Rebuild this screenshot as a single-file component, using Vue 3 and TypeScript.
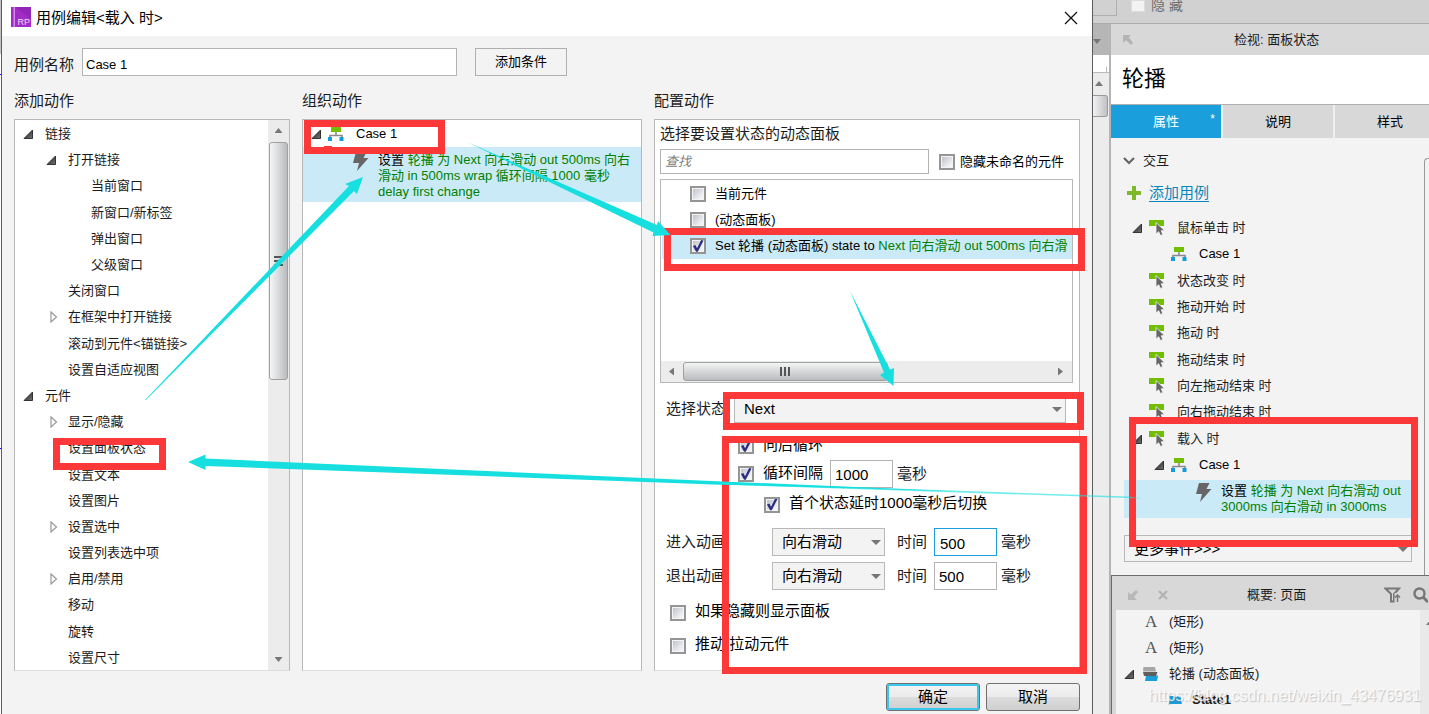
<script setup lang="ts">
import { ref } from 'vue'

interface TreeNode {
  label: string
  level: 1 | 2 | 3
  state?: 'open' | 'closed'
}

interface EventNode {
  label: string
  kind: 'event' | 'case'
  open?: boolean
}

const caseName = ref('Case 1')
const search = ref('')
const hideUnnamed = ref(false)
const stateName = ref('Next')
const wrap = ref(true)
const loop = ref(true)
const loopDelay = ref('1000')
const delayFirst = ref(true)
const showIfHidden = ref(false)
const pushPull = ref(false)
const moreEvents = ref('更多事件>>>')
const hideAll = ref(false)

const actions: TreeNode[] = [
  { label: '链接', level: 1, state: 'open' },
  { label: '打开链接', level: 2, state: 'open' },
  { label: '当前窗口', level: 3 },
  { label: '新窗口/新标签', level: 3 },
  { label: '弹出窗口', level: 3 },
  { label: '父级窗口', level: 3 },
  { label: '关闭窗口', level: 2 },
  { label: '在框架中打开链接', level: 2, state: 'closed' },
  { label: '滚动到元件<锚链接>', level: 2 },
  { label: '设置自适应视图', level: 2 },
  { label: '元件', level: 1, state: 'open' },
  { label: '显示/隐藏', level: 2, state: 'closed' },
  { label: '设置面板状态', level: 2 },
  { label: '设置文本', level: 2 },
  { label: '设置图片', level: 2 },
  { label: '设置选中', level: 2, state: 'closed' },
  { label: '设置列表选中项', level: 2 },
  { label: '启用/禁用', level: 2, state: 'closed' },
  { label: '移动', level: 2 },
  { label: '旋转', level: 2 },
  { label: '设置尺寸', level: 2 },
]

const targets = ref([
  { id: 't1', label: '当前元件', detail: '', checked: false },
  { id: 't2', label: '(动态面板)', detail: '', checked: false },
  { id: 't3', label: 'Set 轮播 (动态面板) state to ', detail: 'Next 向右滑动 out 500ms 向右滑', checked: true },
])

const animations = ref([
  { id: 'in', label: '进入动画', effect: '向右滑动', time: '500', active: true },
  { id: 'out', label: '退出动画', effect: '向右滑动', time: '500', active: false },
])

const events: EventNode[] = [
  { label: '鼠标单击 时', kind: 'event', open: true },
  { label: 'Case 1', kind: 'case' },
  { label: '状态改变 时', kind: 'event' },
  { label: '拖动开始 时', kind: 'event' },
  { label: '拖动 时', kind: 'event' },
  { label: '拖动结束 时', kind: 'event' },
  { label: '向左拖动结束 时', kind: 'event' },
  { label: '向右拖动结束 时', kind: 'event' },
  { label: '载入 时', kind: 'event', open: true },
  { label: 'Case 1', kind: 'case', open: true },
]
</script>

<template>
  <div class="screen">
    <svg class="defs" width="0" height="0" aria-hidden="true">
      <defs>
        <linearGradient id="toggleFill" x1="0" y1="0" x2="1" y2="1">
          <stop offset="0.3" stop-color="#333" />
          <stop offset="1" stop-color="#777" />
        </linearGradient>
      </defs>
      <symbol id="i-open" viewBox="0 0 10 10">
        <path d="M9.5 1V9.5H1Z" fill="url(#toggleFill)" stroke="#333" stroke-width="1" />
      </symbol>
      <symbol id="i-closed" viewBox="0 0 8 12">
        <path d="M1 1L6.5 6L1 11Z" fill="#fff" stroke="#999" stroke-width="1.2" />
      </symbol>
      <symbol id="i-case" viewBox="0 0 16 14">
        <path d="M8 5V9M2 11V8.5H14V11" fill="none" stroke="#8a8a8a" stroke-width="1.6" />
        <path d="M3 0H13V5H3Z" fill="#72bf00" />
        <path d="M0 10H4V14H0ZM11.5 10H15.5V14H11.5Z" fill="#109bdc" />
      </symbol>
      <symbol id="i-event" viewBox="0 0 16 16">
        <path d="M0 0H15V6H0Z" fill="#72bf00" />
        <path d="M7 2.5V14L9.7 11.7L11.5 15.5L13.8 14.4L12.2 10.8L15.5 10.5Z" fill="#666" stroke="#f3f3f3" stroke-width="0.8" />
      </symbol>
      <symbol id="i-bolt" viewBox="0 0 16 20">
        <path d="M3 0H13.5L10.5 6H15.5L4 19L6 11H0Z" fill="#666" />
      </symbol>
      <symbol id="i-stack" viewBox="0 0 16 14">
        <path d="M4 8.5H16L15 14H3Z" fill="#1b9dd9" />
        <path d="M1 5H15.500L14 9H2Z" fill="#5e5e5e" />
        <path d="M1.500 0H13L14 4.500H1Z" fill="#a6a6a6" />
      </symbol>
      <symbol id="i-state" viewBox="0 0 14 8">
        <path d="M1.5 0H6.500L8 1.500L9.500 0H13V5L14 8H0L1 5Z" fill="#1b9dd9" />
      </symbol>
    </svg>

    <div class="edge" aria-hidden="true"></div>

    <main class="dialog">
      <header class="titlebar">
        <svg class="logo" viewBox="0 0 20 20" aria-hidden="true">
          <path d="M0 0H20V20H0Z" fill="#a32bc8" />
          <path d="M2.5 0H4V20H2.5Z" fill="#d08be6" />
          <path d="M4 0H20V12Z" fill="#9226b8" />
          <text x="6.5" y="17.5" class="logo-text">RP</text>
        </svg>
        <h1>用例编辑&lt;载入 时&gt;</h1>
        <button class="close" type="button" aria-label="关闭">
          <svg viewBox="0 0 14 14"><path d="M1 1L13 13M13 1L1 13" stroke="#111" stroke-width="1.3" /></svg>
        </button>
      </header>

      <div class="name-row">
        <label for="case-name">用例名称</label>
        <input id="case-name" v-model="caseName" class="text name-input" type="text" />
        <button class="flat" type="button">添加条件</button>
      </div>

      <div class="columns">
        <section class="col">
          <h2>添加动作</h2>
          <div class="panel with-scroll">
            <ul class="action-tree">
              <li v-for="node in actions" :key="node.label" :class="'lv' + node.level">
                <span class="toggle">
                  <svg v-if="node.state === 'open'" class="ic-open"><use href="#i-open" /></svg>
                  <svg v-if="node.state === 'closed'" class="ic-closed"><use href="#i-closed" /></svg>
                </span>
                <span>{{ node.label }}</span>
              </li>
            </ul>
            <div class="vscroll" aria-hidden="true">
              <i class="tri up"></i>
              <div class="vthumb"><b></b><b></b><b></b></div>
              <i class="tri down"></i>
            </div>
          </div>
        </section>

        <section class="col">
          <h2>组织动作</h2>
          <div class="panel organize">
            <div class="case-row">
              <span class="toggle"><svg class="ic-open"><use href="#i-open" /></svg></span>
              <svg class="ic-case"><use href="#i-case" /></svg>
              <span>Case 1</span>
            </div>
            <div class="action-row">
              <svg class="ic-bolt"><use href="#i-bolt" /></svg>
              <p>设置 <em>轮播 为 Next 向右滑动 out 500ms 向右滑动 in 500ms wrap 循环间隔 1000 毫秒 delay first change</em></p>
            </div>
          </div>
        </section>

        <section class="col">
          <h2>配置动作</h2>
          <div class="panel config">
            <h3>选择要设置状态的动态面板</h3>
            <div class="search-row">
              <input v-model="search" class="text search" type="text" placeholder="查找" aria-label="查找" />
              <input id="hide-unnamed" v-model="hideUnnamed" type="checkbox" />
              <label for="hide-unnamed">隐藏未命名的元件</label>
            </div>
            <div class="target-box">
              <ul>
                <li v-for="t in targets" :key="t.id" :class="{ picked: t.checked }">
                  <input :id="t.id" v-model="t.checked" type="checkbox" />
                  <label :for="t.id">{{ t.label }}<em>{{ t.detail }}</em></label>
                </li>
              </ul>
              <div class="hscroll" aria-hidden="true">
                <i class="tri left"></i>
                <div class="htrack"><div class="hthumb"><b></b><b></b><b></b></div></div>
                <i class="tri right"></i>
              </div>
            </div>

            <div class="state-row">
              <label for="state">选择状态</label>
              <span class="select">
                <select id="state" v-model="stateName"><option>Next</option></select>
              </span>
            </div>
            <div class="opt inset">
              <input id="wrap" v-model="wrap" type="checkbox" />
              <label for="wrap">向后循环</label>
            </div>
            <div class="opt inset">
              <input id="loop" v-model="loop" type="checkbox" />
              <label for="loop">循环间隔</label>
              <input v-model="loopDelay" class="text ms" type="text" aria-label="循环间隔毫秒" />
              <span class="unit">毫秒</span>
            </div>
            <div class="opt inset-more">
              <input id="delay" v-model="delayFirst" type="checkbox" />
              <label for="delay">首个状态延时1000毫秒后切换</label>
            </div>
            <div v-for="a in animations" :key="a.id" class="anim">
              <label :for="'fx-' + a.id">{{ a.label }}</label>
              <span class="select">
                <select :id="'fx-' + a.id" v-model="a.effect"><option>向右滑动</option></select>
              </span>
              <label :for="'time-' + a.id">时间</label>
              <input :id="'time-' + a.id" v-model="a.time" class="text ms" :class="{ active: a.active }" type="text" />
              <span class="unit">毫秒</span>
            </div>
            <div class="opt last">
              <input id="show-hidden" v-model="showIfHidden" type="checkbox" />
              <label for="show-hidden">如果隐藏则显示面板</label>
            </div>
            <div class="opt last">
              <input id="push" v-model="pushPull" type="checkbox" />
              <label for="push">推动/拉动元件</label>
            </div>
          </div>
        </section>
      </div>

      <footer class="buttons">
        <button class="push primary" type="button">确定</button>
        <button class="push" type="button">取消</button>
      </footer>
    </main>

    <aside class="app">
      <div class="toolbar">
        <span class="tool-box"></span>
        <input id="hide-all" v-model="hideAll" class="plain" type="checkbox" />
        <label for="hide-all">隐 藏</label>
      </div>
      <div class="app-body">
        <div class="gutter" aria-hidden="true">
          <div class="gutter-head"><i class="tri down"></i></div>
          <div class="ruler"></div>
          <div class="gutter-scroll"><i class="tri up"></i><div class="gutter-thumb"></div></div>
        </div>
        <div class="inspector">
          <header class="bar inspect-bar">
            <svg class="bar-arrow" viewBox="0 0 10 10"><path d="M0 0H8L5.800 2.200L10 8L8 10L3 5L0 8Z" fill="#b4b4b4" /></svg>
            <span>检视: 面板状态</span>
          </header>
          <div class="widget-name">轮播</div>
          <nav class="tabs">
            <button class="on" type="button">属性<sup>*</sup></button>
            <button type="button">说明</button>
            <button type="button">样式</button>
          </nav>
          <div class="props">
            <div class="props-main">
              <div class="group">
                <svg viewBox="0 0 12 8"><path d="M1 1L6 6L11 1" fill="none" stroke="#666" stroke-width="2.2" /></svg>
                <span>交互</span>
              </div>
              <div class="add-case">
                <svg viewBox="0 0 14 14"><path d="M5 0H9V5H14V9H9V14H5V9H0V5H5Z" fill="#7db928" /></svg>
                <a href="#add-case">添加用例</a>
              </div>
              <ul class="events">
                <li v-for="(e, i) in events" :key="i" :class="e.kind">
                  <span class="toggle"><svg v-if="e.open" class="ic-open"><use href="#i-open" /></svg></span>
                  <svg v-if="e.kind === 'event'" class="ic-event"><use href="#i-event" /></svg>
                  <svg v-else class="ic-case"><use href="#i-case" /></svg>
                  <span>{{ e.label }}</span>
                </li>
              </ul>
              <div class="action-row loaded">
                <svg class="ic-bolt"><use href="#i-bolt" /></svg>
                <p>设置 <em>轮播 为 Next 向右滑动 out 3000ms 向右滑动 in 3000ms</em></p>
              </div>
              <span class="select more">
                <select v-model="moreEvents" aria-label="更多事件"><option>更多事件&gt;&gt;&gt;</option></select>
              </span>
            </div>
            <div class="props-scroll" aria-hidden="true"></div>
          </div>
          <section class="outline">
            <header class="bar outline-bar">
              <svg class="bar-arrow" viewBox="0 0 10 10"><path d="M0 10H9L6 7L10 2L8 0L3 4.500L0 2Z" fill="#b8b8b8" /></svg>
              <svg class="bar-x" viewBox="0 0 10 10"><path d="M1 1L9 9M9 1L1 9" stroke="#b4b4b4" stroke-width="2.4" /></svg>
              <span>概要: 页面</span>
              <svg class="bar-filter" viewBox="0 0 17 16"><path d="M1.500 1.500H15L10 7V14.500H7V7Z" fill="none" stroke="#777" stroke-width="2" /><path d="M10.500 6H17V16H10.500Z" fill="#d8d8d8" /><path d="M13.500 15V8M11 10.500L13.500 8L16 10.500" fill="none" stroke="#777" stroke-width="1.5" /></svg>
              <svg class="bar-search" viewBox="0 0 15 16"><circle cx="6.5" cy="6.5" r="5" fill="none" stroke="#777" stroke-width="2.4" /><path d="M10 10L15 15" stroke="#777" stroke-width="3" /></svg>
            </header>
            <div class="outline-body">
              <ul class="outline-list">
                <li><span class="toggle"></span><span class="glyph">A</span><span>(矩形)</span></li>
                <li><span class="toggle"></span><span class="glyph">A</span><span>(矩形)</span></li>
                <li><span class="toggle"><svg class="ic-open"><use href="#i-open" /></svg></span><svg class="ic-stack"><use href="#i-stack" /></svg><span>轮播 (动态面板)</span></li>
                <li class="child"><svg class="ic-state"><use href="#i-state" /></svg><strong>State1</strong></li>
              </ul>
              <div class="outline-scroll" aria-hidden="true"><i class="tri up"></i></div>
            </div>
          </section>
        </div>
      </div>
    </aside>

    <div class="watermark">https://blog.csdn.net/weixin_43476931</div>

    <svg class="marks" width="1429" height="714" viewBox="0 0 1429 714" aria-hidden="true">
      <g fill="none" stroke="#fc3838" stroke-width="7">
        <rect x="56.5" y="441.5" width="106" height="25" />
        <rect x="307.5" y="123.5" width="134" height="27" />
        <rect x="667.5" y="231.5" width="414" height="36" />
        <rect x="726.5" y="395.5" width="354" height="31" />
        <rect x="725.5" y="439.5" width="358" height="231" />
        <rect x="1132.5" y="420.5" width="282" height="123" />
      </g>
      <rect x="324" y="146" width="8" height="2" fill="#fc3838" />
      <g fill="#18dfdf">
        <path d="M145 400L349 186L345 184L363 177L357 194L354 191L146 400Z" />
        <path d="M467 142L657 225L658 221L670.5 235L652.5 236L653.5 232.5Z" />
        <path d="M850 291L890 369.5L894 368L893.5 386L880 375L884 372.5Z" />
        <path d="M188 462L205.5 454.5V458.5L700 480.5L960 491.5L700 484L205.5 466V470Z" />
      </g>
      <path d="M700 482L1128 496.5L1142 498.5L1128 498L700 484Z" fill="#18dfdf" fill-opacity="0.6" />
    </svg>
  </div>
</template>

<style>
html,
body {
  margin: 0;
  overflow: hidden;
}
</style>

<style scoped>
.screen {
  position: relative;
  display: flex;
  height: 100vh;
  overflow: hidden;
  background: #f3f3f3;
  color: #1c1c1c;
  font-family: "Liberation Sans", "Noto Sans CJK SC", sans-serif;
  font-size: 13px;
  line-height: 16px;
}
.screen * {
  box-sizing: border-box;
}
.defs {
  position: absolute;
}
ul {
  margin: 0;
  padding: 0;
  list-style: none;
}
h1,
h2,
h3,
p {
  margin: 0;
  font-weight: normal;
}
button,
input,
select {
  margin: 0;
  padding: 0;
  color: #000;
  font: inherit;
}
em {
  color: #008000;
  font-style: normal;
}
svg {
  flex: none;
}
.edge {
  flex: 0 0 1px;
  background: linear-gradient(#c4c4c4 54px, #fff 54px, #fff 74px, #00f 74px, #00f 75px, #fff 75px, #fff 448px, #00f 448px, #00f 449px, #fff 449px);
}

/* dialog */
.dialog {
  display: flex;
  flex: 1;
  flex-direction: column;
  min-width: 0;
  border-right: 1px solid #5c5c5c;
  border-left: 1px solid #5c5c5c;
}
.titlebar {
  display: flex;
  align-items: center;
  height: 36px;
  padding: 0 14px 0 9px;
  background: #fff;
}
.logo {
  width: 20px;
  height: 20px;
  margin: 0 5px 3px 0;
}
.logo-text {
  fill: #f0d8f8;
  font-size: 9px;
}
h1 {
  flex: 1;
  color: #000;
  font-size: 15px;
}
.close {
  width: 14px;
  height: 14px;
  border: 0;
  background: none;
}
.close svg {
  display: block;
  width: 14px;
  height: 14px;
}
.name-row {
  display: flex;
  align-items: center;
  height: 28px;
  margin: 12px 12px 0;
  font-size: 15px;
}
.name-row label {
  width: 68px;
  padding-top: 5px;
}
.text {
  height: 28px;
  border: 1px solid #b4b4b4;
  background: #fff;
  outline: 0;
}
.name-input {
  width: 375px;
  padding: 4px 3px 0;
  font-size: 13px;
}
.flat {
  width: 92px;
  height: 28px;
  margin-left: 18px;
  border: 1px solid #b0b0b0;
  background: #f3f3f3;
  font-size: 13px;
}
.columns {
  display: grid;
  flex: 1;
  grid-template-columns: 276fr 340fr 426fr;
  gap: 12px;
  min-height: 0;
  padding: 14px 12px 0;
}
.col {
  display: flex;
  flex-direction: column;
  min-width: 0;
  min-height: 0;
}
h2 {
  height: 29px;
  padding-top: 1px;
  font-size: 15px;
  line-height: 20px;
}
.panel {
  flex: 1;
  min-height: 0;
  border: 1px solid #b8b8b8;
  border-bottom-color: #ddd;
  background: #fff;
}
.with-scroll {
  display: flex;
}
.action-tree {
  display: flex;
  flex: 1;
  flex-direction: column;
}
.action-tree li {
  display: flex;
  flex: 1;
  align-items: center;
  padding-top: 2px;
}
.lv1 {
  padding-left: 8px;
}
.lv2 {
  padding-left: 31px;
}
.lv3 {
  padding-left: 54px;
}
.toggle {
  display: flex;
  flex: none;
  width: 22px;
}
.ic-open {
  width: 10px;
  height: 10px;
}
.ic-closed {
  width: 8px;
  height: 12px;
  margin-left: 4px;
}
.ic-case {
  width: 16px;
  height: 14px;
}
.ic-event {
  width: 16px;
  height: 16px;
}
.ic-bolt {
  width: 16px;
  height: 20px;
}

/* scrollbars */
.vscroll {
  display: flex;
  flex: 0 0 21px;
  flex-direction: column;
  align-items: center;
  padding: 8px 0;
  background: #ececec;
}
.vthumb {
  display: flex;
  flex: 0 0 238px;
  flex-direction: column;
  align-items: center;
  justify-content: center;
  gap: 2px;
  width: 19px;
  margin: 9px 0 auto;
  border: 1px solid #a0a0a0;
  border-radius: 3px;
  background: linear-gradient(90deg, #f6f6f6, #d8dadc 50%, #b9bbbe);
}
.vthumb b {
  width: 9px;
  height: 2px;
  background: #555;
}
.tri {
  width: 8px;
  height: 5px;
  background: #777;
}
.up {
  clip-path: polygon(50% 0, 100% 100%, 0 100%);
}
.down {
  clip-path: polygon(0 0, 100% 0, 50% 100%);
}
.left,
.right {
  width: 5px;
  height: 8px;
}
.left {
  clip-path: polygon(0 50%, 100% 0, 100% 100%);
}
.right {
  clip-path: polygon(0 0, 100% 50%, 0 100%);
}
.hscroll {
  display: flex;
  align-items: center;
  gap: 9px;
  height: 21px;
  padding: 0 9px 0 8px;
  background: #ececec;
}
.htrack {
  flex: 1;
}
.hthumb {
  display: flex;
  align-items: center;
  justify-content: center;
  gap: 2px;
  width: 56%;
  height: 19px;
  border: 1px solid #a0a0a0;
  border-radius: 3px;
  background: linear-gradient(#f4f4f4, #d6d8da 50%, #b9bbbe);
}
.hthumb b {
  width: 2px;
  height: 9px;
  background: #555;
}

/* organize */
.organize {
  color: #000;
}
.case-row {
  display: flex;
  align-items: center;
  height: 27px;
  padding-left: 8px;
}
.case-row .toggle {
  width: 17px;
}
.case-row .ic-case {
  margin-right: 12px;
}
.action-row {
  display: flex;
  padding: 5px 4px 2px 50px;
  background: #cbeaf7;
  color: #000;
}
.action-row .ic-bolt {
  margin-right: 9px;
}

/* configuration */
.config {
  padding: 4px 6px 0 5px;
  overflow: hidden;
}
h3 {
  height: 25px;
  font-size: 15px;
  line-height: 20px;
}
.search-row {
  display: flex;
  align-items: center;
  height: 25px;
  color: #000;
}
.search {
  flex: 1;
  min-width: 0;
  height: 25px;
  margin-right: 10px;
  padding: 0 4px;
}
.search::placeholder {
  color: #808080;
  font-style: italic;
  opacity: 1;
}
.search-row label {
  margin: 0 9px 0 5px;
}
input[type="checkbox"] {
  flex: none;
  width: 16px;
  height: 16px;
  border: 2px solid #959595;
  outline: 1px solid #f4f4f4;
  outline-offset: -3px;
  background: linear-gradient(135deg, #b8bdc8, #f4f4f6 80%);
  appearance: none;
}
input[type="checkbox"]:checked::after {
  display: block;
  width: 12px;
  height: 12px;
  background: #2b2f80;
  clip-path: polygon(8% 50%, 28% 42%, 42% 68%, 76% 0, 96% 4%, 48% 98%, 34% 98%);
  content: "";
}
.target-box {
  display: flex;
  flex-direction: column;
  height: 204px;
  margin-top: 5px;
  border: 1px solid #b8b8b8;
}
.target-box ul {
  flex: 1;
  padding-top: 1px;
  overflow: hidden;
}
.target-box li {
  display: flex;
  align-items: center;
  gap: 9px;
  height: 26px;
  margin-left: 1px;
  padding-left: 28px;
  color: #000;
  white-space: nowrap;
}
.picked {
  background: #cbeaf7;
}
.state-row,
.opt,
.anim {
  display: flex;
  align-items: center;
  height: 28px;
  padding-left: 6px;
  font-size: 15px;
}
.state-row {
  margin: 12px 7px 9px 0;
}
.state-row label {
  width: 68px;
}
.select {
  position: relative;
  display: block;
  height: 28px;
}
.select::after {
  position: absolute;
  top: 12px;
  right: 4px;
  width: 10px;
  height: 5px;
  background: #777;
  clip-path: polygon(0 0, 100% 0, 50% 100%);
  content: "";
  pointer-events: none;
}
.select select {
  width: 100%;
  height: 100%;
  padding: 0 9px;
  border: 1px solid #b8b8b8;
  border-radius: 0;
  background: #f3f3f3;
  appearance: none;
}
.state-row .select {
  flex: 1;
}
.opt label {
  margin: 0 7px 4px 9px;
  color: #000;
}
.inset {
  padding-left: 78px;
}
.inset label {
  margin-bottom: 2px;
}
.inset-more {
  height: 33px;
  margin-bottom: 7px;
  padding-left: 104px;
}
.ms {
  width: 63px;
  padding: 0 4px;
}
.ms.active {
  padding: 2px 5px 0;
  border-color: #1b9fdc;
}
.unit {
  margin-left: 4px;
}
.anim {
  margin-bottom: 6px;
}
.anim .select {
  width: 113px;
  margin: 0 12px 0 46px;
}
.anim .ms {
  margin-left: 7px;
}
.last {
  height: 33px;
  padding-left: 10px;
}
.buttons {
  display: flex;
  justify-content: flex-end;
  gap: 6px;
  padding: 12px 12px 3px;
}
.push {
  width: 94px;
  height: 28px;
  border: 1px solid #707070;
  border-radius: 3px;
  background: linear-gradient(#f4f4f4, #ebebeb 50%, #dcdcdc 50%, #cfcfcf);
  font-size: 15px;
}
.primary {
  box-shadow: inset 0 0 0 2px #3cc8ee;
}

/* host application */
.app {
  display: flex;
  flex: 0 0 336px;
  flex-direction: column;
  min-width: 0;
  overflow: hidden;
}
.toolbar {
  display: flex;
  align-items: flex-start;
  height: 24px;
  border-bottom: 1px solid #acacac;
  background: #d1d1d1;
  color: #6e6e6e;
}
.tool-box {
  width: 24px;
  height: 16px;
  margin-right: 14px;
  border: solid #b0b0b0;
  border-width: 0 1px 1px 0;
}
.toolbar label {
  margin: -3px 0 0 6px;
  font-size: 14px;
}
.toolbar .plain {
  width: 14px;
  height: 12px;
  border: 1px solid #ddd;
  background: #f2f2f2;
}
.app-body {
  display: flex;
  flex: 1;
  min-height: 0;
}
.gutter {
  display: flex;
  flex: 0 0 18px;
  flex-direction: column;
  border-right: 2px solid #b4b4b4;
}
.gutter-head {
  height: 31px;
  padding-top: 15px;
  background: #b6b6b6;
}
.gutter-head .tri,
.gutter-scroll .tri {
  display: block;
}
.ruler {
  height: 18px;
  border-bottom: 1px solid #bbb;
  background: linear-gradient(90deg, transparent 13px, #bbb 13px, #bbb 14px, transparent 14px) 0 100% / 100% 5px no-repeat #fff;
}
.gutter-scroll {
  flex: 1;
  padding-top: 8px;
  background: #ececec;
}
.gutter-scroll .tri {
  margin-left: 2px;
}
.gutter-thumb {
  width: 15px;
  height: 22px;
  margin-top: 9px;
  border: 1px solid #999;
  border-left: 0;
  border-radius: 0 3px 3px 0;
  background: linear-gradient(90deg, #f2f2f2, #bfc1c4);
}
.inspector {
  display: flex;
  flex: 1;
  flex-direction: column;
  min-width: 0;
}
.bar {
  display: flex;
  align-items: center;
  background: #d8d8d8;
}
.inspect-bar {
  height: 31px;
  padding-left: 12px;
}
.bar-arrow,
.bar-x {
  width: 10px;
  height: 10px;
}
.inspect-bar span {
  margin-left: 101px;
}
.widget-name {
  height: 50px;
  padding-left: 11px;
  border-bottom: 1px solid #b0b0b0;
  background: #fff;
  color: #000;
  font-size: 22px;
  line-height: 48px;
}
.tabs {
  display: flex;
  gap: 2px;
  height: 33px;
  overflow: hidden;
  background: #f0f0f0;
}
.tabs button {
  position: relative;
  flex: 0 0 110px;
  border: 0;
  background: #d8d8d8;
}
.tabs .on {
  background: #1b9fdc;
  color: #fff;
}
.tabs sup {
  position: absolute;
  top: 6px;
  right: 6px;
  font-size: 12px;
}
.props {
  display: flex;
  height: 437px;
}
.props-main {
  flex: 1;
  min-width: 0;
  padding: 11px 12px 0 0;
}
.group,
.add-case {
  display: flex;
  align-items: center;
}
.group {
  height: 24px;
  padding-left: 12px;
}
.group svg {
  width: 12px;
  height: 8px;
  margin-right: 8px;
}
.add-case {
  height: 30px;
  margin: 5px 0 7px;
  padding-left: 16px;
  font-size: 15px;
}
.add-case svg {
  width: 14px;
  height: 14px;
  margin-right: 8px;
}
.add-case a {
  color: #0a86bc;
  text-underline-offset: 3px;
}
.events {
  display: grid;
  grid-auto-rows: 1fr;
  height: 263px;
}
.events li {
  display: flex;
  align-items: center;
  padding-left: 21px;
}
.events .case {
  padding-left: 43px;
  color: #000;
}
.events .toggle {
  width: 17px;
}
.events svg + span {
  margin-left: 12px;
}
.loaded {
  margin: 2px 0 17px 13px;
  padding: 3px 4px 3px 72px;
}
.more {
  height: 27px;
  margin-left: 13px;
  font-size: 15px;
}
.props-scroll {
  width: 5px;
  margin-top: 20px;
  border-top: 1px solid #999;
  border-left: 1px solid #999;
  border-radius: 4px 0 0;
}
.outline {
  display: flex;
  flex: 1;
  flex-direction: column;
  min-height: 0;
  border: solid #6c6c6c;
  border-width: 1px 0 0 1px;
}
.outline-bar {
  flex: none;
  height: 34px;
  padding: 4px 0 0 16px;
}
.bar-x {
  margin: 0 79px 0 20px;
}
.bar-filter {
  width: 17px;
  height: 16px;
  margin-left: 78px;
}
.bar-search {
  width: 15px;
  height: 16px;
  margin-left: 12px;
}
.outline-body {
  display: flex;
  flex: 1;
  min-height: 0;
  border-left: 4px solid #d8d8d8;
}
.outline-list {
  flex: 1;
}
.outline-list li {
  display: flex;
  align-items: center;
  height: 26px;
  padding: 0 0 2px 8px;
}
.outline-list .toggle {
  width: 18px;
}
.glyph {
  width: 27px;
  padding-left: 3px;
  color: #555;
  font-family: "Liberation Serif", serif;
  font-size: 17px;
}
.ic-stack {
  width: 16px;
  height: 14px;
  margin-right: 11px;
}
.outline-list .child {
  padding-left: 52px;
}
.ic-state {
  width: 14px;
  height: 8px;
  margin-right: 10px;
}
.outline-scroll {
  width: 9px;
  padding-top: 10px;
  background: #e9e9e9;
}
.outline-scroll .tri {
  display: block;
  margin-left: 6px;
}
.watermark {
  position: absolute;
  right: 8px;
  bottom: 8px;
  color: rgba(255, 255, 255, 0.8);
  font-size: 16px;
  line-height: 20px;
  text-shadow: 1px 1px 1px rgba(120, 120, 120, 0.4);
}
.marks {
  position: absolute;
  top: 0;
  left: 0;
  pointer-events: none;
}
</style>
